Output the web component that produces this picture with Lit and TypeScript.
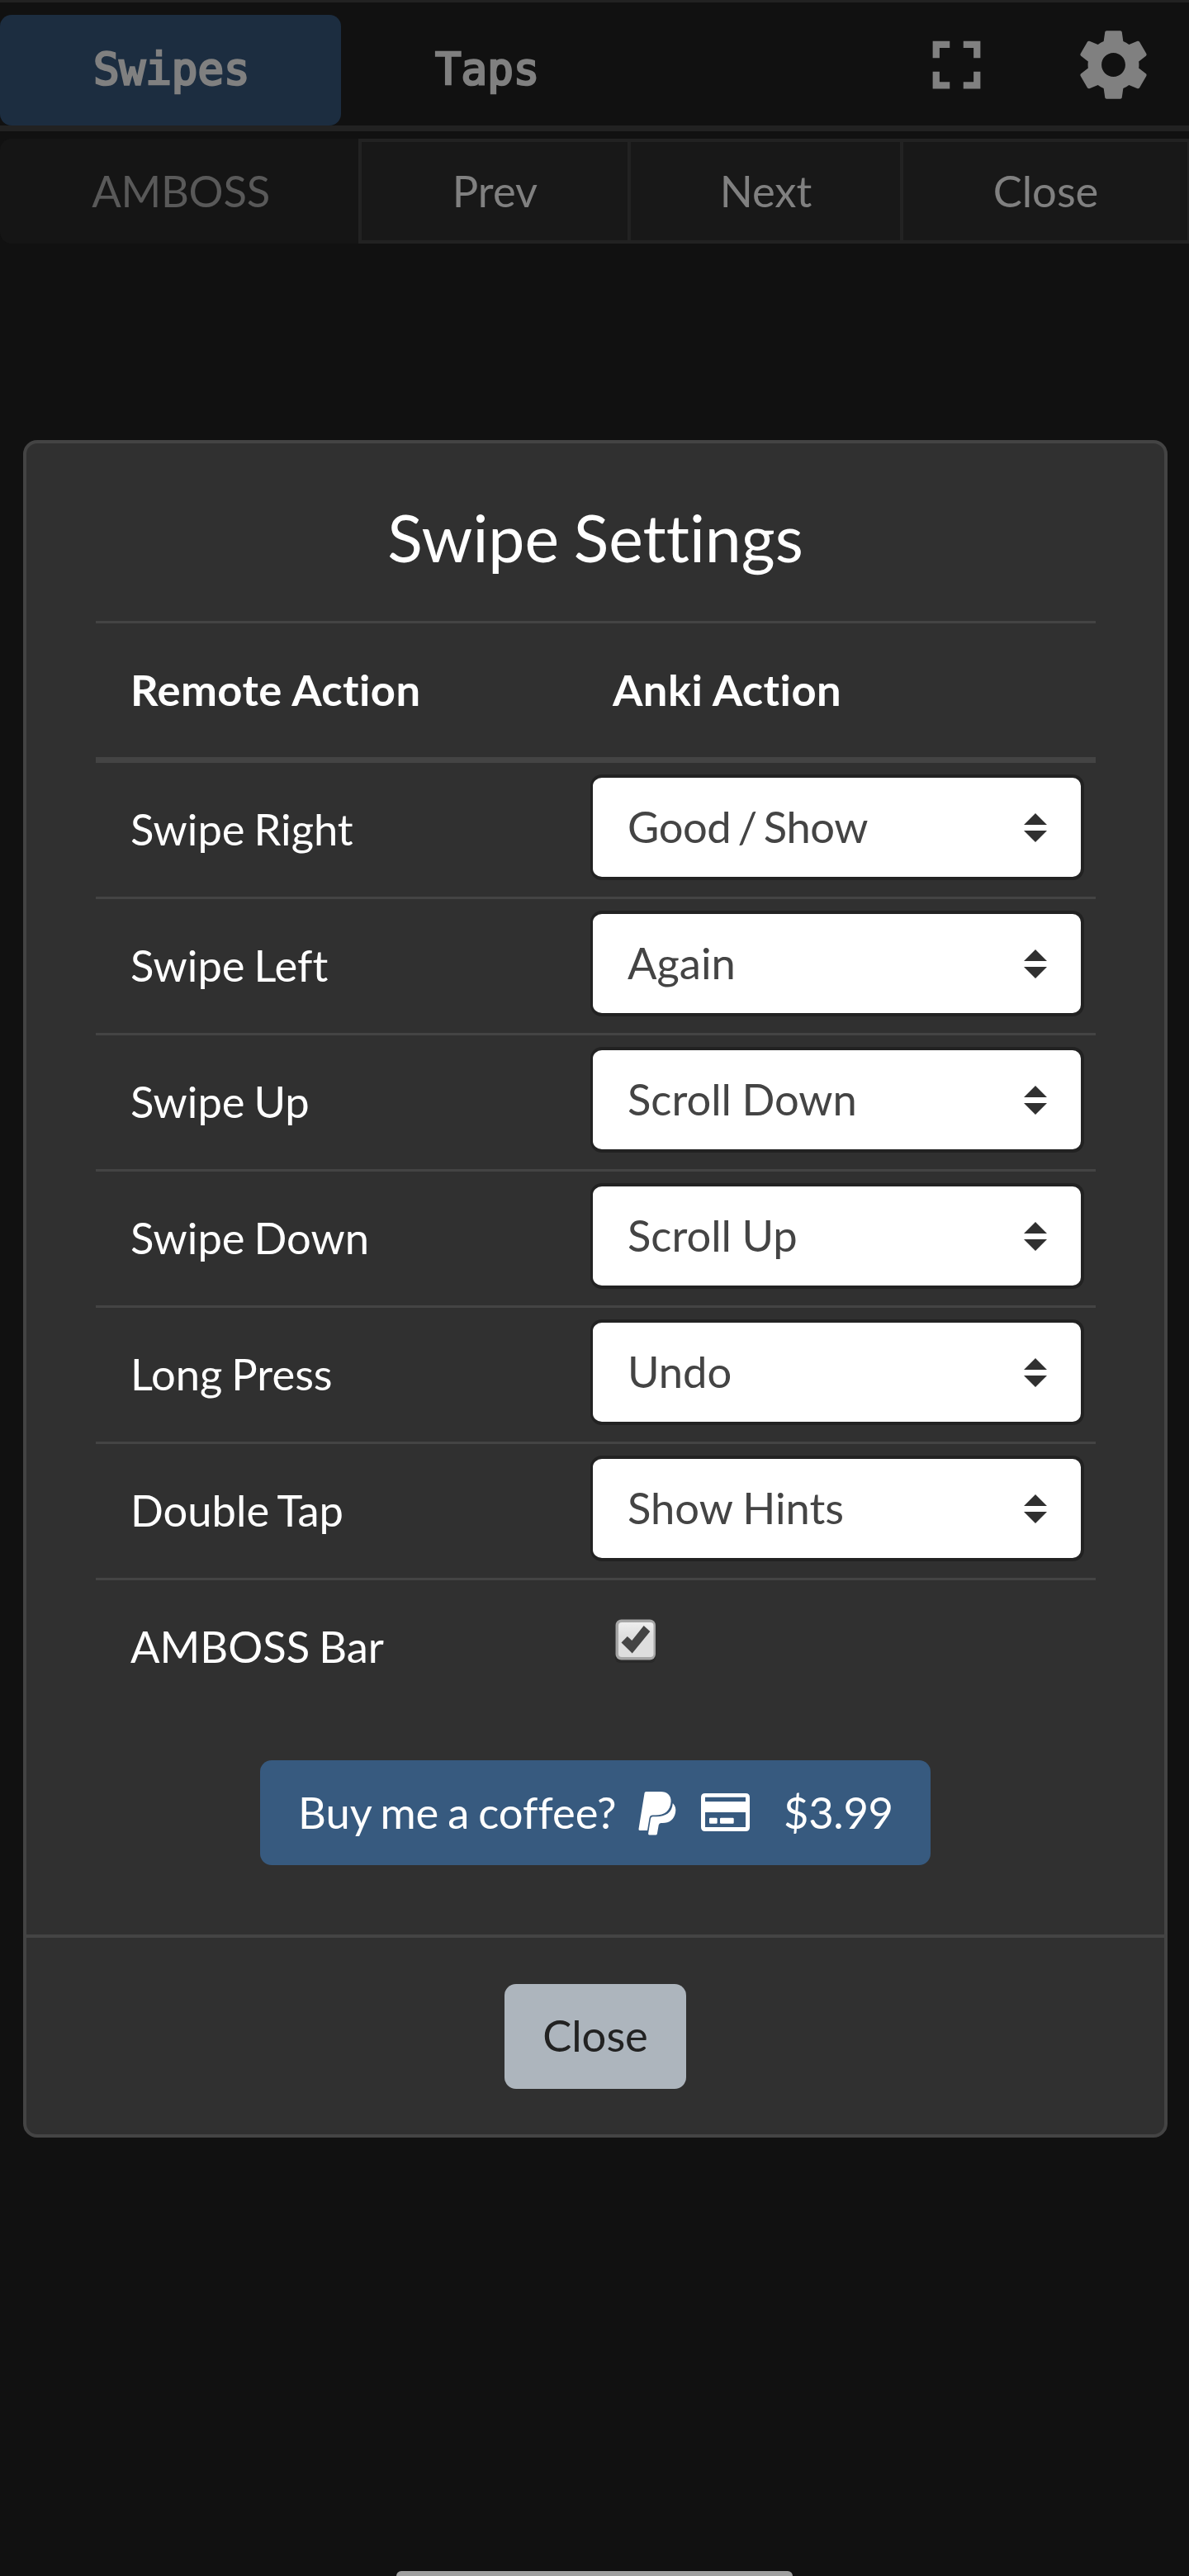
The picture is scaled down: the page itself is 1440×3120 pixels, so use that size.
import { LitElement, html, css, svg } from "lit";
import { customElement, state } from "lit/decorators.js";

const ICONS = {
  fullscreen: svg`<path d="M7 14H5v5h5v-2H7v-3zm-2-4h2V7h3V5H5v5zm12 7h-3v2h5v-5h-2v3zM14 5v2h3v3h2V5h-5z"/>`,
  gear: svg`<path d="M19.43 12.98c.04-.32.07-.64.07-.98s-.03-.66-.07-.98l2.11-1.65c.19-.15.24-.42.12-.64l-2-3.46c-.12-.22-.39-.3-.61-.22l-2.49 1c-.52-.4-1.08-.73-1.69-.98l-.38-2.65C14.46 2.18 14.25 2 14 2h-4c-.25 0-.46.18-.49.42l-.38 2.65c-.61.25-1.17.59-1.69.98l-2.49-1c-.23-.09-.49 0-.61.22l-2 3.46c-.13.22-.07.49.12.64l2.11 1.65c-.04.32-.07.65-.07.98s.03.66.07.98l-2.11 1.65c-.19.15-.24.42-.12.64l2 3.46c.12.22.39.3.61.22l2.49-1c.52.4 1.08.73 1.69.98l.38 2.65c.03.24.24.42.49.42h4c.25 0 .46-.18.49-.42l.38-2.65c.61-.25 1.17-.59 1.69-.98l2.49 1c.23.09.49 0 .61-.22l2-3.46c.12-.22.07-.49-.12-.64l-2.11-1.65zM12 15.5c-1.93 0-3.5-1.57-3.5-3.5s1.57-3.5 3.5-3.5 3.5 1.57 3.5 3.5-1.57 3.5-3.5 3.5z"/>`,
};

const ACTIONS: [string, string][] = [
  ["Swipe Right", "Good / Show"],
  ["Swipe Left", "Again"],
  ["Swipe Up", "Scroll Down"],
  ["Swipe Down", "Scroll Up"],
  ["Long Press", "Undo"],
  ["Double Tap", "Show Hints"],
];

@customElement("app-root")
export class AppRoot extends LitElement {
  @state() private ambossBar = true;

  static styles = css`
    :host {
      display: block;
      width: 1440px;
      height: 3120px;
      position: relative;
      overflow: hidden;
      background: #111;
      color: #fff;
      font-family: Lato, "Liberation Sans", sans-serif;
      font-size: 52.5px;
      line-height: 79px;
      font-variant-ligatures: none;
      word-spacing: -2.5px;
    }
    * { box-sizing: border-box; }
    .nav {
      display: flex;
      height: 159px;
      border-top: 3px solid #222;
      border-bottom: 7px solid #222;
      padding-top: 15px;
      color: #808080;
    }
    .tab {
      height: 134px;
      padding: 0 112px 0 114px;
      font-family: "DejaVu Sans Mono", monospace;
      line-height: 132px;
      -webkit-text-stroke: 2.6px currentColor;
    }
    .tab.active { background: #1c2d40; border-radius: 14px; width: 413px; padding: 0 0 0 113px; }
    .tools { margin-left: auto; display: flex; gap: 91px; padding: 11px 42px 0 0; }
    .tools svg { width: 99px; height: 99px; fill: currentColor; }
    .bar {
      display: grid;
      grid-template-columns: 434px 326px 330px 350px;
      margin-top: 9px;
      height: 127px;
      color: #808080;
      line-height: 117px;
      text-align: center;
    }
    .cell { background: #181818; border: solid #222; border-width: 4px 0 4px 4px; padding-left: 1px; }
    .cell.off { background: #151515; color: #595959; border-color: transparent; border-width: 4px 0; border-radius: 14px 0 0 14px; padding-left: 4px; letter-spacing: -0.25px; }
    .cell.last { border-right-width: 2px; }
    .modal {
      margin: 238px 26px 0 28px;
      height: 2056px;
      background: #303030;
      border: 4px solid #444;
      border-radius: 17px;
      display: flex;
      flex-direction: column;
    }
    .title { margin: 0; font-size: 78.75px; font-weight: 400; line-height: 95px; text-align: center; padding-top: 66px; height: 215px; }
    .table { margin: 0 83px 0 84px; }
    .row { display: grid; grid-template-columns: 599px 598px; height: 165px; border-top: 3px solid #444; }
    .row.head { height: 172px; border-bottom: 7px solid #444; font-weight: 700; letter-spacing: 0.45px; word-spacing: 0; }
    .row.first { height: 162px; border-top: 0; }
    .label { padding: 40px 0 0 42px; }
    .head .col2 { padding-left: 27px; }
    .select {
      margin-top: 14px;
      height: 128px;
      background: #fff;
      color: #444;
      border: solid #222;
      border-width: 4px 4px 4px 3px;
      border-radius: 14px;
      padding: 0 41px 0 42px;
      display: flex;
      align-items: center;
      justify-content: space-between;
      word-spacing: -1px;
    }
    .select span { padding-bottom: 3px; }
    .select .slashed { word-spacing: -5px; letter-spacing: -0.4px; }
    .select svg { width: 28px; height: 35px; fill: #303030; }
    .check { width: 49px; height: 53px; margin: 47px 0 0 30px; }
    .check svg { display: block; width: 49px; height: 53px; }
    .coffee {
      align-self: center;
      margin: 56px 0 0 0;
      width: 812px;
      height: 127px;
      border-radius: 14px;
      background: #375a7f;
      display: flex;
      align-items: center;
      padding: 0 0 2px 46px;
    }
    .coffee .ask { width: 384px; white-space: nowrap; }
    .coffee .pp { flex: none; width: 46px; height: 54px; margin: 5px 0 0 28px; }
    .coffee .card { flex: none; width: 60px; height: 47px; margin: 2px 0 0 30px; }
    .coffee .price { margin-left: 40px; letter-spacing: -0.3px; }
    .footer { margin-top: auto; height: 242px; border-top: 4px solid #444; display: flex; justify-content: center; padding-top: 56px; }
    .close { width: 220px; height: 127px; line-height: 123px; border-radius: 14px; background: #adb5bd; color: #222; text-align: center; }
    .home { position: absolute; left: 480px; bottom: 0; width: 480px; height: 6px; border-radius: 6px 6px 0 0; background: #a0a0a0; }
  `;

  render() {
    return html`
      <nav class="nav">
        <div class="tab active">Swipes</div>
        <div class="tab">Taps</div>
        <div class="tools">
          <svg viewBox="0 0 24 24">${ICONS.fullscreen}</svg>
          <svg viewBox="0 0 24 24">${ICONS.gear}</svg>
        </div>
      </nav>
      <div class="bar">
        <div class="cell off">AMBOSS</div>
        <div class="cell">Prev</div>
        <div class="cell">Next</div>
        <div class="cell last">Close</div>
      </div>
      <section class="modal">
        <h4 class="title">Swipe Settings</h4>
        <div class="table">
          <div class="row head">
            <div class="label">Remote Action</div>
            <div class="label col2">Anki Action</div>
          </div>
          ${ACTIONS.map(
            ([name, action], i) => html`<div class="row ${i === 0 ? "first" : ""}">
              <div class="label">${name}</div>
              <div class="select">
                <span class=${action.includes("/") ? "slashed" : ""}>${action}</span>
                <svg viewBox="0 0 4 5"><path d="M2 0L0 2h4zm0 5L0 3h4z"/></svg>
              </div>
            </div>`
          )}
          <div class="row">
            <div class="label">AMBOSS Bar</div>
            <div class="check" @click=${() => (this.ambossBar = !this.ambossBar)}>
              <svg viewBox="0 0 49 53">
                <defs><linearGradient id="g" x1="0" y1="0" x2="0" y2="1"><stop offset="0" stop-color="#eee"/><stop offset=".4" stop-color="#dedede"/></linearGradient></defs>
                <rect x="0" y="2" width="49" height="51" rx="6" fill="#292929"/>
                <rect x=".5" y=".5" width="48.500" height="49" rx="7" fill="#a6a6a6"/>
                <rect x="4" y="4" width="42.500" height="42" rx="4" fill="url(#g)"/>
                ${this.ambossBar ? svg`<path d="M7.500 28.500L14.800 21L20.300 26L34.700 8L42.300 15L20.700 41.500Z" fill="#444"/>` : null}
              </svg>
            </div>
          </div>
        </div>
        <div class="coffee">
          <span class="ask">Buy me a coffee?</span>
          <svg class="pp" viewBox="0 0 46 54" fill="#fff">
            <path d="M7.600 1.500Q7.900 0 9.500 0H27C35 0 40 4.500 39.600 12C39 23 32 28.600 21 28.600H17.500Q14.200 28.600 13.500 32L11 47H1.800Q.2 47 .5 45.200Z"/>
            <path d="M41.800 14C45 17 46 21 45 25.500C43.500 33.500 38 38 29.500 38H27.500Q25.200 38 24.700 40.500L22.900 51Q22.600 52.500 21 52.500H13.500Q11.800 52.500 12.100 50.800L15 32.500Q15.400 30.200 17.800 30.200H22C33 30.200 41 25.500 41.800 14Z"/>
          </svg>
          <svg class="card" viewBox="0 0 60 47"><path fill="#fff" fill-rule="evenodd" d="M5 0H54Q59 0 59 5V41Q59 46 54 46H5Q0 46 0 41V5Q0 0 5 0ZM5 4.700V10H54V4.700ZM5 23V41H54V23ZM10 31Q10 29.700 11.200 29.700H18.500Q19.700 29.700 19.700 31V35.500Q19.700 36.700 18.500 36.700H11.200Q10 36.700 10 35.500ZM23 31Q23 29.700 24.200 29.700H38.500Q39.700 29.700 39.700 31V35.500Q39.700 36.700 38.500 36.700H24.200Q23 36.700 23 35.500Z"/></svg>
          <span class="price">$3.99</span>
        </div>
        <div class="footer"><div class="close">Close</div></div>
      </section>
      <div class="home"></div>
    `;
  }
}
